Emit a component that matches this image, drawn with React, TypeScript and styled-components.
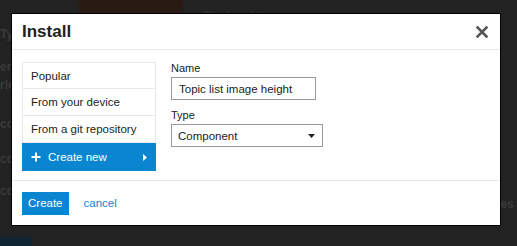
import React from "react";
import styled, { createGlobalStyle } from "styled-components";

const GlobalStyle = createGlobalStyle`
  html, body {
    margin: 0;
    padding: 0;
    background: #222;
  }
  body {
    font-family: "Liberation Sans", Arial, sans-serif;
    width: 517px;
    height: 246px;
    overflow: hidden;
  }
`;

// faint page content behind the overlay
const Backdrop = styled.div`
  position: relative;
  width: 517px;
  height: 246px;
  background: #222;
  overflow: hidden;
`;

const BackdropTop = styled.div`
  display: flex;
  align-items: flex-start;
  gap: 20px;
  padding-left: 79px;
`;

const DarkBanner = styled.div`
  width: 104px;
  height: 15px;
  background: #2a1a14;
`;

const FaintTitle = styled.div`
  margin-top: 8px;
  color: #2c2c2c;
  font-weight: bold;
  font-size: 17px;
`;

const FaintText = styled.div<{ $top: number; $left: number }>`
  position: absolute;
  top: ${(p) => p.$top}px;
  left: ${(p) => p.$left}px;
  color: #3a3a3a;
  font-weight: bold;
  font-size: 12px;
`;

const FaintButton = styled.div`
  position: absolute;
  left: 0;
  top: 237px;
  width: 32px;
  height: 12px;
  background: #0f2433;
`;

const Modal = styled.div`
  position: absolute;
  left: 11px;
  top: 13px;
  width: 490px;
  height: 213px;
  box-sizing: border-box;
  background: #fff;
  border: 1px solid #000;
  display: flex;
  flex-direction: column;
`;

const Header = styled.div`
  height: 36px;
  box-sizing: border-box;
  border-bottom: 1px solid #e9e9e9;
  display: flex;
  align-items: center;
  justify-content: space-between;
  padding: 0 10px 0 10px;
`;

const Title = styled.h3`
  margin: 0;
  font-size: 17px;
  font-weight: bold;
  color: #222;
`;

const Close = styled.button`
  border: 0;
  background: none;
  padding: 0;
  width: 16px;
  height: 16px;
  display: flex;
  align-items: center;
  justify-content: center;
  cursor: pointer;
`;

const Body = styled.div`
  flex: 1;
  display: flex;
  gap: 15px;
  padding: 12px 10px 9px 10px;
  border-bottom: 1px solid #e9e9e9;
`;

const SourceList = styled.ul`
  list-style: none;
  margin: 0;
  padding: 0;
  width: 134px;
  align-self: flex-start;
`;

const SourceItem = styled.li<{ $active?: boolean }>`
  height: 27px;
  box-sizing: border-box;
  display: flex;
  align-items: center;
  gap: 7px;
  padding: 0 8px;
  font-size: 11.5px;
  color: ${(p) => (p.$active ? "#fff" : "#222")};
  background: ${(p) => (p.$active ? "#0a86d1" : "#fff")};
  border: 1px solid ${(p) => (p.$active ? "#0a86d1" : "#e9e9e9")};
  border-top-width: ${(p) => (p.$active ? "1px" : "0")};
  &:first-child {
    border-top-width: 1px;
  }
  &:last-child {
    height: 28px;
  }
`;

const ItemLabel = styled.span`
  flex: 1;
`;

const Form = styled.div`
  display: flex;
  flex-direction: column;
`;

const Label = styled.label`
  font-size: 11px;
  color: #222;
  margin-bottom: 3px;
`;

const TextInput = styled.input`
  width: 145px;
  height: 23px;
  box-sizing: border-box;
  border: 1px solid #999;
  padding: 0 7px;
  font-family: "Liberation Sans", Arial, sans-serif;
  font-size: 11.5px;
  color: #222;
  margin-bottom: 9px;
  outline: none;
`;

const Select = styled.div`
  width: 152px;
  height: 23px;
  box-sizing: border-box;
  border: 1px solid #999;
  padding: 0 7px 0 6px;
  display: flex;
  align-items: center;
  justify-content: space-between;
  font-size: 11.5px;
  color: #222;
`;

const Footer = styled.div`
  height: 44px;
  display: flex;
  align-items: center;
  gap: 15px;
  padding: 0 10px;
`;

const PrimaryButton = styled.button`
  height: 23px;
  padding: 0 6px;
  border: 0;
  background: #0a86d1;
  color: #fff;
  font-family: "Liberation Sans", Arial, sans-serif;
  font-size: 11.5px;
`;

const Link = styled.a`
  color: #0a86d1;
  font-size: 11.5px;
  text-decoration: none;
`;

const App: React.FC = () => {
  return (
    <>
      <GlobalStyle />
      <Backdrop>
        <BackdropTop>
          <DarkBanner />
          <FaintTitle>Default</FaintTitle>
        </BackdropTop>
        <FaintText $top={27} $left={0}>Typ</FaintText>
        <FaintText $top={60} $left={0}>er</FaintText>
        <FaintText $top={78} $left={0}>rle</FaintText>
        <FaintText $top={117} $left={0}>cc</FaintText>
        <FaintText $top={152} $left={0}>cc</FaintText>
        <FaintText $top={184} $left={0}>cc</FaintText>
        <FaintText $top={197} $left={494}>Tes</FaintText>
        <FaintButton />
        <Modal>
          <Header>
            <Title>Install</Title>
            <Close aria-label="close">
              <svg width="12" height="12" viewBox="0 0 12 12">
                <path d="M1.5 1.5 L10.5 10.5 M10.5 1.5 L1.5 10.5" stroke="#555" strokeWidth="2.6" strokeLinecap="square" />
              </svg>
            </Close>
          </Header>
          <Body>
            <SourceList>
              <SourceItem>Popular</SourceItem>
              <SourceItem>From your device</SourceItem>
              <SourceItem>From a git repository</SourceItem>
              <SourceItem $active>
                <svg width="10" height="10" viewBox="0 0 10 10">
                  <path d="M5 0.5 V9.5 M0.5 5 H9.5" stroke="#fff" strokeWidth="2" />
                </svg>
                <ItemLabel>Create new</ItemLabel>
                <svg width="4" height="7" viewBox="0 0 4 7">
                  <path d="M0 0 L4 3.5 L0 7 Z" fill="#fff" />
                </svg>
              </SourceItem>
            </SourceList>
            <Form>
              <Label>Name</Label>
              <TextInput defaultValue="Topic list image height" />
              <Label>Type</Label>
              <Select>
                <span>Component</span>
                <svg width="7" height="4" viewBox="0 0 7 4">
                  <path d="M0 0 L7 0 L3.5 4 Z" fill="#222" />
                </svg>
              </Select>
            </Form>
          </Body>
          <Footer>
            <PrimaryButton>Create</PrimaryButton>
            <Link href="#">cancel</Link>
          </Footer>
        </Modal>
      </Backdrop>
    </>
  );
};

export default App;
